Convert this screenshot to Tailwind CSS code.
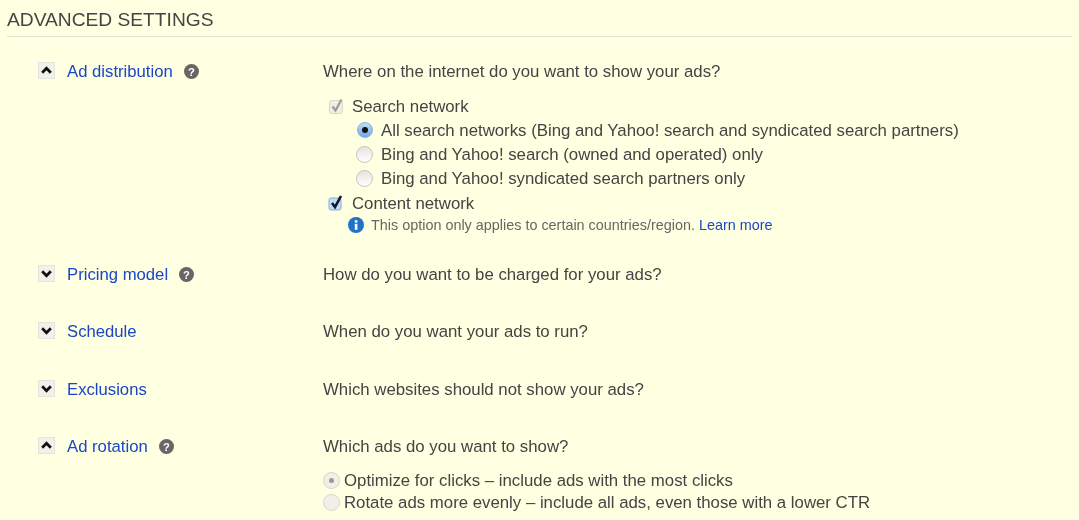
<!DOCTYPE html>
<html lang="en">
<head>
  <meta charset="UTF-8" />
  <title>Advanced settings</title>
  <script src="https://cdn.jsdelivr.net/npm/@tailwindcss/browser@4"></script>
</head>
<body class="bg-[#ffffe1] text-[#444] font-['Liberation_Sans',Arial,sans-serif] text-[16.8px] leading-6 w-[1079px] h-[520px] overflow-hidden">

  <div class="blur-[0.4px]">
  <header class="ml-[7px] mr-[7px] h-[37px] border-b border-[#e2e2d2] pt-2">
    <h2 class="text-[19.2px] leading-6">ADVANCED SETTINGS</h2>
  </header>

  <main class="pt-[23px]">
    <!-- Ad distribution -->
    <section class="flex h-[203px]">
      <div class="w-[323px] flex items-start pl-[38px]">
        <button class="w-[17px] h-[17px] mt-[2px] bg-[#f1f1ec] border border-[#e4e4dc] flex items-center justify-center">
          <svg class="w-[13px] h-[13px]" viewBox="0 0 12 12"><path d="M2 8l4-4 4 4" fill="none" stroke="#111" stroke-width="2.6"/></svg>
        </button>
        <a href="#" class="ml-3 text-[16.7px] text-[#1a47c8]">Ad distribution</a>
        <svg class="w-[15px] h-[15px] ml-[11px] mt-[4px]" viewBox="0 0 16 16"><circle cx="8" cy="8" r="8" fill="#666"/><text x="8" y="12.5" text-anchor="middle" font-size="12" font-weight="700" fill="#fff" font-family="Liberation Sans">?</text></svg>
      </div>
      <div>
        <p>Where on the internet do you want to show your ads?</p>
        <div class="mt-[11px] flex items-center h-6">
          <svg class="w-[16px] h-[16px] ml-[6px] mb-[2px]" viewBox="0 0 16 16"><rect x=".5" y="2.5" width="13" height="13" rx="2" fill="#efefe6" stroke="#d8d8cc"/><path d="M3.5 8.5l3 4 6-11" fill="none" stroke="#9c9c94" stroke-width="2.2"/></svg>
          <span class="ml-[7px]">Search network</span>
        </div>
        <div class="flex items-center h-6">
          <span class="ml-[34px] mb-[2px] w-[16px] h-[16px] rounded-full bg-gradient-to-b from-[#c3dcf8] to-[#6ea8ee] border border-[#8fabd0] flex items-center justify-center"><span class="w-[6px] h-[6px] rounded-full bg-[#111]"></span></span>
          <span class="ml-[8px]">All search networks (Bing and Yahoo! search and syndicated search partners)</span>
        </div>
        <div class="flex items-center h-6">
          <span class="ml-[33px] mb-[2px] w-[17px] h-[17px] rounded-full bg-gradient-to-b from-[#e4e4e0] to-[#fff] border border-[#c4c4bc]"></span>
          <span class="ml-[8px]">Bing and Yahoo! search (owned and operated) only</span>
        </div>
        <div class="flex items-center h-6">
          <span class="ml-[33px] mb-[2px] w-[17px] h-[17px] rounded-full bg-gradient-to-b from-[#e4e4e0] to-[#fff] border border-[#c4c4bc]"></span>
          <span class="ml-[8px]">Bing and Yahoo! syndicated search partners only</span>
        </div>
        <div class="flex items-center h-6 mt-[1px]">
          <svg class="w-[16px] h-[16px] ml-[5px] mb-[3px]" viewBox="0 0 16 16"><rect x="1" y="3" width="12" height="12" rx="2" fill="#c3dcf8" stroke="#8fabd0"/><path d="M4 8l3 4 6-11" fill="none" stroke="#0c1a30" stroke-width="2.6"/></svg>
          <span class="ml-[8px]">Content network</span>
        </div>
        <div class="flex items-center h-5 -mt-[1px] text-[14.4px] text-[#666]">
          <svg class="w-[16px] h-[16px] ml-[25px]" viewBox="0 0 16 16"><circle cx="8" cy="8" r="8" fill="#1f73c9"/><rect x="6.8" y="6.8" width="2.6" height="6" fill="#fff"/><rect x="6.8" y="3.2" width="2.6" height="2.4" fill="#fff"/></svg>
          <span class="ml-[7px]">This option only applies to certain countries/region. <a href="#" class="text-[#1a47c8]">Learn more</a></span>
        </div>
      </div>
    </section>

    <!-- Pricing model -->
    <section class="flex h-[57px]">
      <div class="w-[323px] flex items-start pl-[38px]">
        <button class="w-[17px] h-[17px] mt-[2px] bg-[#f1f1ec] border border-[#e4e4dc] flex items-center justify-center">
          <svg class="w-[13px] h-[13px]" viewBox="0 0 12 12"><path d="M2 4l4 4 4-4" fill="none" stroke="#111" stroke-width="2.6"/></svg>
        </button>
        <a href="#" class="ml-3 text-[16.7px] text-[#1a47c8]">Pricing model</a>
        <svg class="w-[15px] h-[15px] ml-[11px] mt-[4px]" viewBox="0 0 16 16"><circle cx="8" cy="8" r="8" fill="#666"/><text x="8" y="12.5" text-anchor="middle" font-size="12" font-weight="700" fill="#fff" font-family="Liberation Sans">?</text></svg>
      </div>
      <p>How do you want to be charged for your ads?</p>
    </section>

    <!-- Schedule -->
    <section class="flex h-[58px]">
      <div class="w-[323px] flex items-start pl-[38px]">
        <button class="w-[17px] h-[17px] mt-[2px] bg-[#f1f1ec] border border-[#e4e4dc] flex items-center justify-center">
          <svg class="w-[13px] h-[13px]" viewBox="0 0 12 12"><path d="M2 4l4 4 4-4" fill="none" stroke="#111" stroke-width="2.6"/></svg>
        </button>
        <a href="#" class="ml-3 text-[16.7px] text-[#1a47c8]">Schedule</a>
      </div>
      <p>When do you want your ads to run?</p>
    </section>

    <!-- Exclusions -->
    <section class="flex h-[57px]">
      <div class="w-[323px] flex items-start pl-[38px]">
        <button class="w-[17px] h-[17px] mt-[2px] bg-[#f1f1ec] border border-[#e4e4dc] flex items-center justify-center">
          <svg class="w-[13px] h-[13px]" viewBox="0 0 12 12"><path d="M2 4l4 4 4-4" fill="none" stroke="#111" stroke-width="2.6"/></svg>
        </button>
        <a href="#" class="ml-3 text-[16.7px] text-[#1a47c8]">Exclusions</a>
      </div>
      <p>Which websites should not show your ads?</p>
    </section>

    <!-- Ad rotation -->
    <section class="flex">
      <div class="w-[323px] flex items-start pl-[38px]">
        <button class="w-[17px] h-[17px] mt-[2px] bg-[#f1f1ec] border border-[#e4e4dc] flex items-center justify-center">
          <svg class="w-[13px] h-[13px]" viewBox="0 0 12 12"><path d="M2 8l4-4 4 4" fill="none" stroke="#111" stroke-width="2.6"/></svg>
        </button>
        <a href="#" class="ml-3 text-[16.7px] text-[#1a47c8]">Ad rotation</a>
        <svg class="w-[15px] h-[15px] ml-[11px] mt-[4px]" viewBox="0 0 16 16"><circle cx="8" cy="8" r="8" fill="#666"/><text x="8" y="12.5" text-anchor="middle" font-size="12" font-weight="700" fill="#fff" font-family="Liberation Sans">?</text></svg>
      </div>
      <div>
        <p>Which ads do you want to show?</p>
        <div class="mt-[11px] flex items-center h-[22px]">
          <span class="mb-[1px] w-[17px] h-[17px] rounded-full bg-[#f0f0e8] border border-[#d4d4ca] flex items-center justify-center"><span class="w-[5px] h-[5px] rounded-full bg-[#999]"></span></span>
          <span class="ml-1">Optimize for clicks – include ads with the most clicks</span>
        </div>
        <div class="flex items-center h-[22px]">
          <span class="mb-[1px] w-[17px] h-[17px] rounded-full bg-[#f0f0e8] border border-[#d4d4ca]"></span>
          <span class="ml-1">Rotate ads more evenly – include all ads, even those with a lower CTR</span>
        </div>
      </div>
    </section>
  </main>
  </div>
</body>
</html>
